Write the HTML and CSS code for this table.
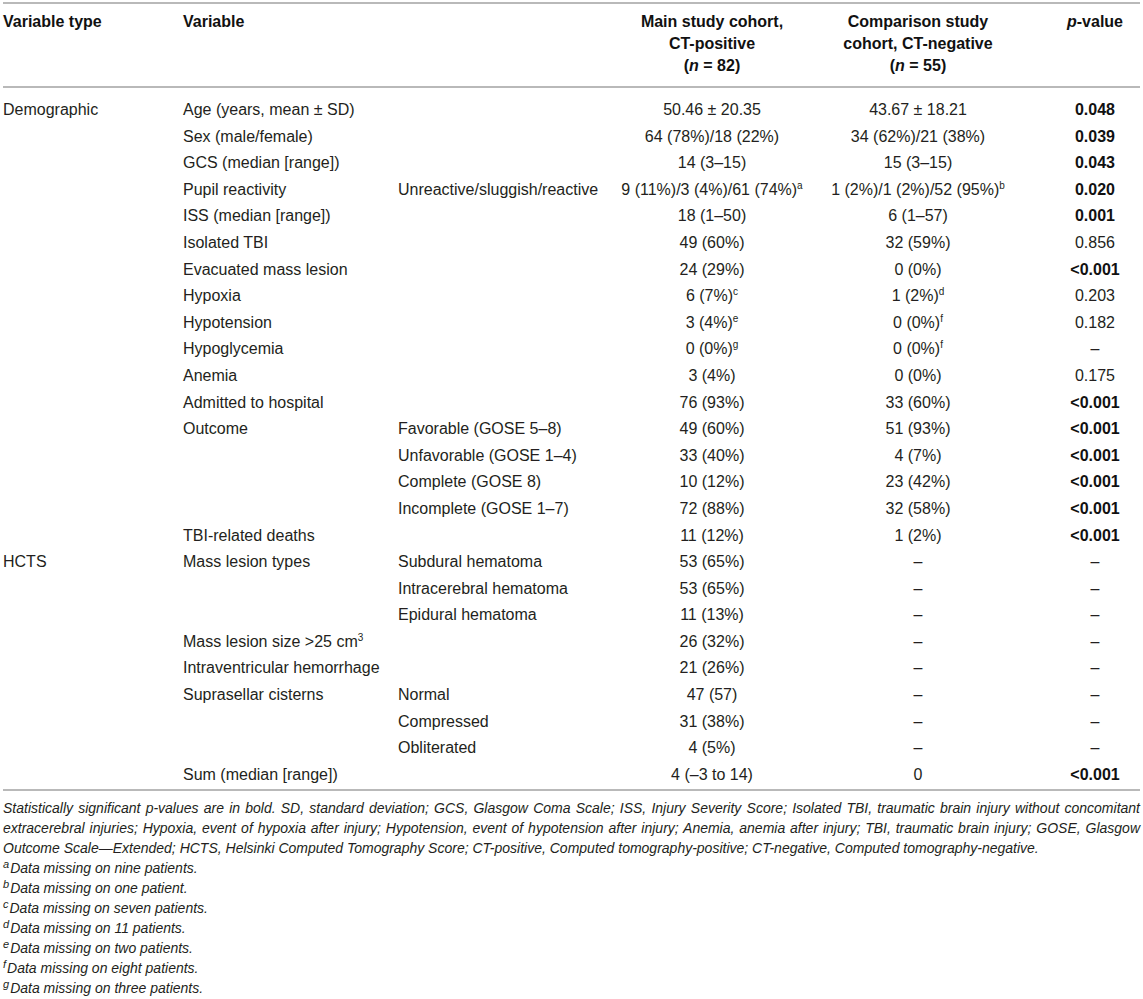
FILE: index.html
```html
<!DOCTYPE html>
<html lang="en">
<head>
<meta charset="utf-8">
<title>Table</title>
<link rel="stylesheet" href="styles.css">
</head>
<body>
<div class="wrap">
<table class="data">
<colgroup>
<col class="c1"><col class="c2"><col class="c3"><col class="c4"><col class="c5"><col class="c6">
</colgroup>
<thead>
<tr>
<th class="l">Variable type</th>
<th class="l">Variable</th>
<th class="l"></th>
<th class="c">Main study cohort,<br>CT-positive<br>(<i>n</i> = 82)</th>
<th class="c">Comparison study<br>cohort, CT-negative<br>(<i>n</i> = 55)</th>
<th class="c p"><i>p</i>-value</th>
</tr>
</thead>
<tbody>
<tr><td>Demographic</td><td>Age (years, mean ± SD)</td><td></td><td class="c">50.46 ± 20.35</td><td class="c">43.67 ± 18.21</td><td class="c p"><b>0.048</b></td></tr>
<tr><td></td><td>Sex (male/female)</td><td></td><td class="c">64 (78%)/18 (22%)</td><td class="c">34 (62%)/21 (38%)</td><td class="c p"><b>0.039</b></td></tr>
<tr><td></td><td>GCS (median [range])</td><td></td><td class="c">14 (3–15)</td><td class="c">15 (3–15)</td><td class="c p"><b>0.043</b></td></tr>
<tr><td></td><td>Pupil reactivity</td><td>Unreactive/sluggish/reactive</td><td class="c">9 (11%)/3 (4%)/61 (74%)<sup>a</sup></td><td class="c">1 (2%)/1 (2%)/52 (95%)<sup>b</sup></td><td class="c p"><b>0.020</b></td></tr>
<tr><td></td><td>ISS (median [range])</td><td></td><td class="c">18 (1–50)</td><td class="c">6 (1–57)</td><td class="c p"><b>0.001</b></td></tr>
<tr><td></td><td>Isolated TBI</td><td></td><td class="c">49 (60%)</td><td class="c">32 (59%)</td><td class="c p">0.856</td></tr>
<tr><td></td><td>Evacuated mass lesion</td><td></td><td class="c">24 (29%)</td><td class="c">0 (0%)</td><td class="c p"><b>&lt;0.001</b></td></tr>
<tr><td></td><td>Hypoxia</td><td></td><td class="c">6 (7%)<sup>c</sup></td><td class="c">1 (2%)<sup>d</sup></td><td class="c p">0.203</td></tr>
<tr><td></td><td>Hypotension</td><td></td><td class="c">3 (4%)<sup>e</sup></td><td class="c">0 (0%)<sup>f</sup></td><td class="c p">0.182</td></tr>
<tr><td></td><td>Hypoglycemia</td><td></td><td class="c">0 (0%)<sup>g</sup></td><td class="c">0 (0%)<sup>f</sup></td><td class="c p">–</td></tr>
<tr><td></td><td>Anemia</td><td></td><td class="c">3 (4%)</td><td class="c">0 (0%)</td><td class="c p">0.175</td></tr>
<tr><td></td><td>Admitted to hospital</td><td></td><td class="c">76 (93%)</td><td class="c">33 (60%)</td><td class="c p"><b>&lt;0.001</b></td></tr>
<tr><td></td><td>Outcome</td><td>Favorable (GOSE 5–8)</td><td class="c">49 (60%)</td><td class="c">51 (93%)</td><td class="c p"><b>&lt;0.001</b></td></tr>
<tr><td></td><td></td><td>Unfavorable (GOSE 1–4)</td><td class="c">33 (40%)</td><td class="c">4 (7%)</td><td class="c p"><b>&lt;0.001</b></td></tr>
<tr><td></td><td></td><td>Complete (GOSE 8)</td><td class="c">10 (12%)</td><td class="c">23 (42%)</td><td class="c p"><b>&lt;0.001</b></td></tr>
<tr><td></td><td></td><td>Incomplete (GOSE 1–7)</td><td class="c">72 (88%)</td><td class="c">32 (58%)</td><td class="c p"><b>&lt;0.001</b></td></tr>
<tr><td></td><td>TBI-related deaths</td><td></td><td class="c">11 (12%)</td><td class="c">1 (2%)</td><td class="c p"><b>&lt;0.001</b></td></tr>
<tr><td>HCTS</td><td>Mass lesion types</td><td>Subdural hematoma</td><td class="c">53 (65%)</td><td class="c">–</td><td class="c p">–</td></tr>
<tr><td></td><td></td><td>Intracerebral hematoma</td><td class="c">53 (65%)</td><td class="c">–</td><td class="c p">–</td></tr>
<tr><td></td><td></td><td>Epidural hematoma</td><td class="c">11 (13%)</td><td class="c">–</td><td class="c p">–</td></tr>
<tr><td></td><td>Mass lesion size &gt;25 cm<sup>3</sup></td><td></td><td class="c">26 (32%)</td><td class="c">–</td><td class="c p">–</td></tr>
<tr><td></td><td>Intraventricular hemorrhage</td><td></td><td class="c">21 (26%)</td><td class="c">–</td><td class="c p">–</td></tr>
<tr><td></td><td>Suprasellar cisterns</td><td>Normal</td><td class="c">47 (57)</td><td class="c">–</td><td class="c p">–</td></tr>
<tr><td></td><td></td><td>Compressed</td><td class="c">31 (38%)</td><td class="c">–</td><td class="c p">–</td></tr>
<tr><td></td><td></td><td>Obliterated</td><td class="c">4 (5%)</td><td class="c">–</td><td class="c p">–</td></tr>
<tr><td></td><td>Sum (median [range])</td><td></td><td class="c">4 (–3 to 14)</td><td class="c">0</td><td class="c p"><b>&lt;0.001</b></td></tr>
</tbody>
</table>
<div class="notes">
<p class="just"><span class="ln">Statistically significant p-values are in bold. SD, standard deviation; GCS, Glasgow Coma Scale; ISS, Injury Severity Score; Isolated TBI, traumatic brain injury without concomitant</span><span class="ln">extracerebral injuries; Hypoxia, event of hypoxia after injury; Hypotension, event of hypotension after injury; Anemia, anemia after injury; TBI, traumatic brain injury; GOSE, Glasgow</span><span class="ln last">Outcome Scale—Extended; HCTS, Helsinki Computed Tomography Score; CT-positive, Computed tomography-positive; CT-negative, Computed tomography-negative.</span></p>
<p><sup>a</sup>Data missing on nine patients.</p>
<p><sup>b</sup>Data missing on one patient.</p>
<p><sup>c</sup>Data missing on seven patients.</p>
<p><sup>d</sup>Data missing on 11 patients.</p>
<p><sup>e</sup>Data missing on two patients.</p>
<p><sup>f</sup>Data missing on eight patients.</p>
<p><sup>g</sup>Data missing on three patients.</p>
</div>
</div>
</body>
</html>
```
FILE: styles.css
```css
html, body {
  margin: 0;
  padding: 0;
  background: #ffffff;
}
body {
  font-family: "Liberation Sans", Arial, sans-serif;
  color: #231f20;
}
.wrap {
  width: 1137px;
  padding: 2px 3px 0 3px;
}
.data {
  width: 1137px;
  border-collapse: collapse;
  table-layout: fixed;
  border-top: 2px solid #b9b9b9;
  border-bottom: 2px solid #b9b9b9;
  font-size: 16px;
}
.c1 { width: 180px; }
.c2 { width: 215px; }
.c3 { width: 214px; }
.c4 { width: 200px; }
.c5 { width: 212px; }
.c6 { width: 116px; }
.data th {
  font-weight: bold;
  vertical-align: top;
  line-height: 22px;
  padding: 7px 0 9px 0;
  border-bottom: 2px solid #b9b9b9;
  color: #111;
}
.data td {
  padding: 0;
  line-height: 26.6px;
  white-space: nowrap;
  vertical-align: middle;
}
.data tbody tr:first-child td {
  padding-top: 9px;
}
.data tbody tr:last-child td {
  padding-bottom: 1px;
}
.l { text-align: left; }
.c { text-align: center; }
.data .p { padding-left: 26px; }
.data b { color: #111; }
.data sup {
  font-size: 10px;
  line-height: 0;
  vertical-align: 6px;
}
.notes {
  margin-top: 7px;
  font-size: 14px;
  font-style: italic;
  line-height: 20px;
  color: #231f20;
}
.notes p {
  margin: 0;
}
.notes .ln {
  display: block;
  text-align: justify;
  text-align-last: justify;
  white-space: nowrap;
}
.notes .ln.last {
  text-align-last: left;
}
.notes sup {
  font-size: 11px;
  line-height: 0;
  vertical-align: 5px;
  margin-right: 1px;
}
```
